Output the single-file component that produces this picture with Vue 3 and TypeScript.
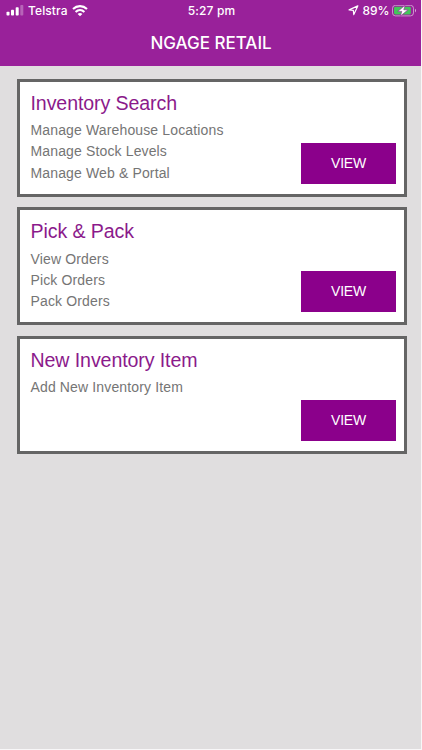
<script setup lang="ts">
interface MenuCard {
  id: string
  title: string
  lines: string[]
}

const cards: MenuCard[] = [
  {
    id: 'search',
    title: 'Inventory Search',
    lines: ['Manage Warehouse Locations', 'Manage Stock Levels', 'Manage Web & Portal'],
  },
  { id: 'pick', title: 'Pick & Pack', lines: ['View Orders', 'Pick Orders', 'Pack Orders'] },
  { id: 'new', title: 'New Inventory Item', lines: ['Add New Inventory Item'] },
]
</script>

<template>
  <div class="screen">
    <header class="header">
      <div class="status">
        <div class="side">
          <svg class="signal" width="18" height="12" viewBox="0 0 18 12" fill="#fff">
            <rect x="0.5" y="6.8" width="3" height="3.8" rx="0.8" />
            <rect x="5" y="4.8" width="3" height="5.8" rx="0.8" />
            <rect x="9.7" y="2.2" width="3" height="8.4" rx="0.8" />
            <rect x="14.3" y="0" width="3" height="10.6" rx="0.8" opacity="0.3" />
          </svg>
          <span class="carrier">Telstra</span>
          <svg class="wifi" width="16" height="12" viewBox="0 0 16 12" fill="none" stroke="#fff" stroke-width="2.1">
            <path d="M1 4C5 0.2 11 0.2 15 4" />
            <path d="M3.6 6.9C6.2 4.5 9.8 4.5 12.4 6.9" />
            <path d="M8 11.3L5.6 8.9C7 7.7 9 7.7 10.4 8.9Z" fill="#fff" stroke="none" />
          </svg>
        </div>
        <span class="time">5:27 pm</span>
        <div class="side right">
          <svg class="locate" width="11" height="11" viewBox="0 0 11 11" fill="none" stroke="#fff" stroke-width="1.2" stroke-linejoin="round">
            <path d="M9.8 0.9L1.1 4.9L5.3 5.4L5.8 9.6Z" />
          </svg>
          <span class="percent">89%</span>
          <svg class="battery" width="25" height="12" viewBox="0 0 25 12">
            <rect x="0.5" y="0.3" width="21" height="10.6" rx="3" fill="none" stroke="#fff" stroke-opacity="0.5" />
            <path d="M23 3.8C24.4 4.4 24.4 6.8 23 7.4Z" fill="#fff" fill-opacity="0.6" />
            <rect x="2" y="1.8" width="16.8" height="7.7" rx="1.4" fill="#43c55a" />
            <path d="M13 0.3L5.8 6.4H9.8L8.4 11.1L16 4.8H11.8Z" fill="#fff" stroke="#99219a" stroke-width="0.6" />
          </svg>
        </div>
      </div>
      <h1 class="heading">NGAGE RETAIL</h1>
    </header>

    <main class="cards">
      <section v-for="card in cards" :key="card.id" class="card">
        <div class="info">
          <h2 class="title">{{ card.title }}</h2>
          <p v-for="line in card.lines" :key="line" class="line">{{ line }}</p>
        </div>
        <button class="view" type="button">VIEW</button>
      </section>
    </main>
  </div>
</template>

<style>
body {
  background: #f8f7f8;
}
</style>

<style scoped>
.screen {
  width: 421px;
  height: 749px;
  box-sizing: border-box;
  background: #e0dedf;
  font-family: 'Liberation Sans', Arial, sans-serif;
  overflow: hidden;
}
.header {
  height: 65.5px;
  background: #99219a;
  color: #fff;
}
.status {
  display: grid;
  grid-template-columns: 1fr auto 1fr;
  height: 21px;
  padding: 0 4px 0 6px;
  font-family: Inter, sans-serif;
  font-size: 12px;
  font-weight: 500;
  line-height: 21px;
}
.side {
  display: flex;
  align-items: center;
}
.right {
  justify-content: flex-end;
}
.carrier {
  margin: 0 4px 0 4px;
  letter-spacing: 0.1px;
}
.time {
  letter-spacing: 0.12px;
}
.percent {
  margin: 0 2.5px 0 3.5px;
}
.heading {
  margin: 0;
  padding: 12px 0 0 1px;
  font-family: Inter, sans-serif;
  font-size: 17px;
  font-weight: 500;
  line-height: 21px;
  text-align: center;
}
.cards {
  display: flex;
  flex-direction: column;
  gap: 10.7px;
  padding: 13.3px 14px 0 16.5px;
}
.card {
  display: flex;
  justify-content: space-between;
  align-items: flex-end;
  height: 118px;
  box-sizing: border-box;
  padding: 0 8px 10px 11px;
  border: 3px solid #656565;
  background: #fff;
}
.info {
  align-self: flex-start;
  padding-top: 10px;
}
.title {
  margin: 0 0 5.3px;
  color: #8b1a8b;
  font-size: 19.6px;
  font-weight: 400;
  letter-spacing: -0.1px;
  line-height: 23px;
}
.line {
  margin: 0;
  color: #757575;
  font-size: 14px;
  letter-spacing: 0.14px;
  line-height: 21.3px;
}
.view {
  width: 95px;
  height: 41px;
  padding: 0;
  border: 0;
  background: #8b008b;
  color: #fff;
  font-family: inherit;
  font-size: 14px;
  letter-spacing: -0.2px;
  line-height: 41px;
}
</style>
